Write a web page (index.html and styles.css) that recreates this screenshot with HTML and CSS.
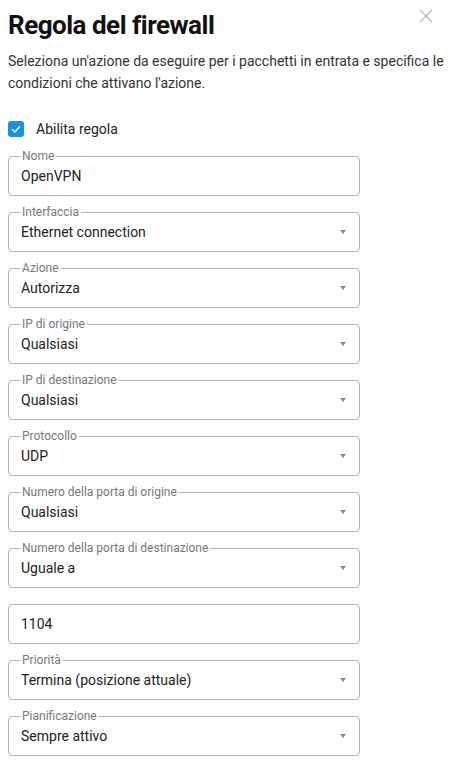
FILE: index.html
```html
<!DOCTYPE html>
<html lang="it">

<head>
    <meta charset="UTF-8">
    <meta name="viewport" content="width=device-width, initial-scale=1.0">
    <title>Regola del firewall</title>
    <link rel="stylesheet" href="styles.css">
</head>

<body>
    <div class="dialog">
        <header class="dialog-header">
            <h1>Regola del firewall</h1>
            <button class="close-btn" aria-label="Chiudi">
                <svg width="14" height="14" viewBox="0 0 14 14">
                    <path d="M1 1 L13 13 M13 1 L1 13" stroke="#bdbdbd" stroke-width="1.4" fill="none" />
                </svg>
            </button>
        </header>

        <p class="description">Seleziona un'azione da eseguire per i pacchetti in entrata e specifica le condizioni che attivano l'azione.</p>

        <label class="check-row">
            <span class="checkbox">
                <svg width="10" height="8" viewBox="0 0 10 8">
                    <path d="M1 4.2 L3.8 7 L9 1.2" stroke="#fff" stroke-width="1.4" fill="none" />
                </svg>
            </span>
            Abilita regola
        </label>

        <div class="fields">
            <div class="field">
                <span class="field-label">Nome</span>
                <span class="field-value">OpenVPN</span>
            </div>
            <div class="field select">
                <span class="field-label">Interfaccia</span>
                <span class="field-value">Ethernet connection</span>
                <span class="arrow"></span>
            </div>
            <div class="field select">
                <span class="field-label">Azione</span>
                <span class="field-value">Autorizza</span>
                <span class="arrow"></span>
            </div>
            <div class="field select">
                <span class="field-label">IP di origine</span>
                <span class="field-value">Qualsiasi</span>
                <span class="arrow"></span>
            </div>
            <div class="field select">
                <span class="field-label">IP di destinazione</span>
                <span class="field-value">Qualsiasi</span>
                <span class="arrow"></span>
            </div>
            <div class="field select">
                <span class="field-label">Protocollo</span>
                <span class="field-value">UDP</span>
                <span class="arrow"></span>
            </div>
            <div class="field select">
                <span class="field-label">Numero della porta di origine</span>
                <span class="field-value">Qualsiasi</span>
                <span class="arrow"></span>
            </div>
            <div class="field select">
                <span class="field-label">Numero della porta di destinazione</span>
                <span class="field-value">Uguale a</span>
                <span class="arrow"></span>
            </div>
            <div class="field">
                <span class="field-value">1104</span>
            </div>
            <div class="field select">
                <span class="field-label">Priorità</span>
                <span class="field-value">Termina (posizione attuale)</span>
                <span class="arrow"></span>
            </div>
            <div class="field select">
                <span class="field-label">Pianificazione</span>
                <span class="field-value">Sempre attivo</span>
                <span class="arrow"></span>
            </div>
        </div>
    </div>
</body>

</html>
```

FILE: styles.css
```css
body {
    font-family: Roboto, "Noto Sans", sans-serif;
    background-color: #fff;
    color: #222;
    margin: 0;
    padding: 0;
}

.dialog {
    padding: 8px 8px 0 8px;
}

.dialog-header {
    display: flex;
    justify-content: space-between;
    align-items: flex-start;
}

.dialog-header h1 {
    margin: 1px 0 0 0;
    font-size: 26px;
    font-weight: 700;
    letter-spacing: -0.5px;
    line-height: 32px;
    color: #111;
}

.close-btn {
    background: none;
    border: none;
    padding: 0;
    margin: 1px 11px 0 0;
    cursor: pointer;
}

.description {
    margin: 9px 0 0 0;
    font-size: 14px;
    line-height: 22px;
    color: #333;
}

.check-row {
    display: flex;
    align-items: center;
    gap: 12px;
    margin-top: 27px;
    font-size: 14px;
    color: #222;
}

.checkbox {
    width: 16px;
    height: 16px;
    border-radius: 3px;
    background-color: #1a8fe3;
    display: flex;
    align-items: center;
    justify-content: center;
}

.fields {
    display: flex;
    flex-direction: column;
    gap: 16px;
    margin-top: 19px;
    width: 352px;
}

.field {
    position: relative;
    height: 40px;
    box-sizing: border-box;
    border: 1px solid #b3b3b3;
    border-radius: 4px;
    display: flex;
    align-items: center;
    padding: 0 12px;
}

.field-label {
    position: absolute;
    top: -8px;
    left: 11px;
    padding: 0 2px;
    background-color: #fff;
    font-size: 12px;
    line-height: 14px;
    color: #777;
}

.field-value {
    flex: 1;
    font-size: 14px;
    color: #222;
}

.arrow {
    width: 0;
    height: 0;
    border-left: 3.5px solid transparent;
    border-right: 3.5px solid transparent;
    border-top: 4px solid #8a8a8a;
    margin-right: 1px;
}
```
